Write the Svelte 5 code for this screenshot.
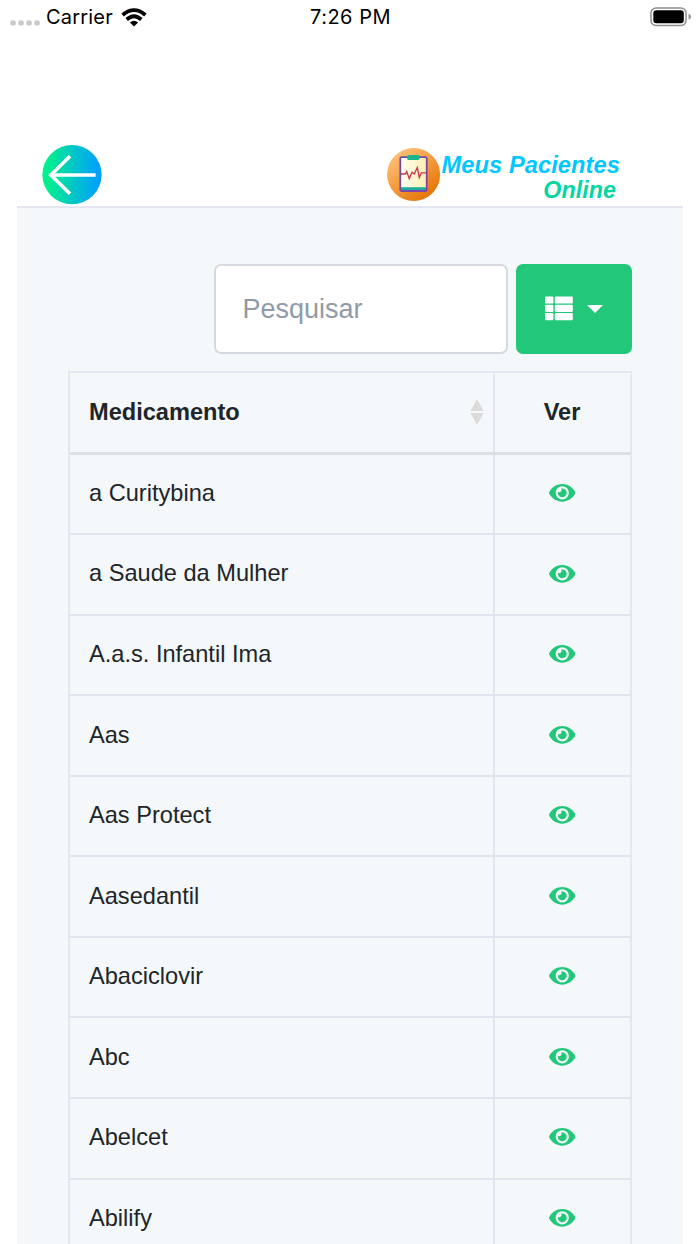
<script>
  let search = "";

  const medicines = [
    "a Curitybina",
    "a Saude da Mulher",
    "A.a.s. Infantil Ima",
    "Aas",
    "Aas Protect",
    "Aasedantil",
    "Abaciclovir",
    "Abc",
    "Abelcet",
    "Abilify",
  ];
</script>

<div class="screen">
  <div class="status">
    <div class="carrier">
      <svg class="dots" width="30" height="6" viewBox="0 0 30 6" fill="#c9c9c9">
        <circle cx="3" cy="3" r="2.8" />
        <circle cx="11" cy="3" r="2.8" />
        <circle cx="19" cy="3" r="2.8" />
        <circle cx="27" cy="3" r="2.8" />
      </svg>
      <span>Carrier</span>
      <svg class="wifi" width="26" height="19" viewBox="0 0 26 19">
        <g fill="none" stroke="#000" stroke-width="3.8">
          <path d="M1.6 7Q13-2.8 24.4 7" />
          <path d="M5.7 11.5Q13 5 20.3 11.5" />
        </g>
        <path d="M13 18.6 8.9 14.6Q13 11 17.1 14.6Z" />
      </svg>
    </div>
    <div class="time">7:26 PM</div>
    <svg class="battery" width="41" height="20" viewBox="0 0 41 20">
      <rect x="1" y="1" width="35" height="17.4" rx="5" fill="none" stroke="#8e8e8e" stroke-width="1.5" />
      <rect x="3.3" y="3.2" width="30.5" height="13" rx="3" />
      <path d="M38.6 6.8Q41 7.4 41 9.7T38.6 12.6Z" fill="#8e8e8e" />
    </svg>
  </div>

  <header>
    <button class="back" type="button" aria-label="Voltar">
      <svg width="60" height="60" viewBox="0 0 60 60">
        <defs>
          <linearGradient id="back-fill">
            <stop offset="0" stop-color="#00f38a" />
            <stop offset=".12" stop-color="#00ed91" />
            <stop offset=".9" stop-color="#00a3f8" />
            <stop offset="1" stop-color="#009cff" />
          </linearGradient>
        </defs>
        <circle cx="30" cy="29.7" r="29.6" fill="url(#back-fill)" />
        <path d="M53.6 30H9.5M28 11.2 8.8 30 28 48.8" fill="none" stroke="#fff" stroke-width="3.6" />
      </svg>
    </button>
    <div class="brand">
      <svg width="54" height="54" viewBox="0 0 54 54">
        <defs>
          <linearGradient id="logo-fill" x1=".15" y1=".1" x2=".8" y2=".95">
            <stop offset="0" stop-color="#ffc078" />
            <stop offset="1" stop-color="#e57300" />
          </linearGradient>
          <linearGradient id="board-fill" x1="0" y1="0" x2="1" y2="1">
            <stop offset="0" stop-color="#6152a5" />
            <stop offset="1" stop-color="#8b3fae" />
          </linearGradient>
          <linearGradient id="sheet-fill">
            <stop offset="0" stop-color="#fffdf0" />
            <stop offset="1" stop-color="#fff0b3" />
          </linearGradient>
        </defs>
        <circle cx="26.6" cy="26.5" r="26.5" fill="url(#logo-fill)" />
        <rect x="12.4" y="8.2" width="28.2" height="35.8" rx="2.5" fill="url(#board-fill)" />
        <rect x="14.2" y="10" width="24.6" height="30" fill="url(#sheet-fill)" />
        <rect x="14.2" y="39.2" width="24.6" height="2.8" fill="#20ad96" />
        <rect x="20.2" y="7" width="12.4" height="5" rx="1.6" fill="#19b58d" />
        <path
          d="M14 26h4.5l1.2-2.5 2.6 7.2 2.7-6.4 2.3 1.7 3-6.5 2 10 2-4.7h4.7"
          fill="none"
          stroke="#c8324b"
          stroke-width="1.3"
        />
      </svg>
      <div class="name">
        <div>Meus Pacientes</div>
        <div class="online">Online</div>
      </div>
    </div>
  </header>

  <main>
    <div class="toolbar">
      <input type="text" placeholder="Pesquisar" bind:value={search} />
      <button class="columns" type="button" aria-label="Colunas">
        <svg width="28" height="25" viewBox="0 0 28 25" fill="#fff">
          <rect y="0.4" width="8.4" height="7.2" rx="1.2" />
          <rect x="9.8" y="0.4" width="18" height="7.2" rx="1.2" />
          <rect y="8.7" width="8.4" height="7.2" rx="1.2" />
          <rect x="9.8" y="8.7" width="18" height="7.2" rx="1.2" />
          <rect y="17" width="8.4" height="7.2" rx="1.2" />
          <rect x="9.8" y="17" width="18" height="7.2" rx="1.2" />
        </svg>
        <svg width="16" height="8" viewBox="0 0 16 8" fill="#fff">
          <path d="M0 0H16L8 8Z" />
        </svg>
      </button>
    </div>

    <div class="table">
      <div class="row head">
        <div class="cell">
          <span>Medicamento</span>
          <svg width="14" height="26" viewBox="0 0 14 26" fill="#dbdbdb">
            <path d="M7 .3 13.7 12H.3ZM.3 14H13.7L7 25.7Z" />
          </svg>
        </div>
        <div class="cell view">Ver</div>
      </div>
      {#each medicines as medicine}
        <div class="row">
          <div class="cell name-cell">{medicine}</div>
          <div class="cell view">
            <svg class="eye" width="26.5" height="23.6" viewBox="0 0 576 512" fill="#23c77a">
              <path
                d="M572.52 241.4C518.29 135.59 410.93 64 288 64S57.68 135.64 3.48 241.41a32.35 32.35 0 0 0 0 29.19C57.71 376.41 165.07 448 288 448s230.32-71.64 284.52-177.41a32.35 32.35 0 0 0 0-29.19zM288 400a144 144 0 1 1 144-144 143.93 143.93 0 0 1-144 144zm0-240a95.31 95.31 0 0 0-25.31 3.79 47.85 47.85 0 0 1-66.9 66.9A95.78 95.78 0 1 0 288 160z"
              />
            </svg>
          </div>
        </div>
      {/each}
    </div>
  </main>
</div>

<style>
  :global(body) {
    background: #fff;
  }

  .screen {
    box-sizing: border-box;
    height: 1244px;
    overflow: hidden;
    display: flex;
    flex-direction: column;
    font-family: "Liberation Sans", Arial, sans-serif;
    font-size: 23.6px;
    color: #212529;
  }

  .screen * {
    box-sizing: border-box;
  }

  svg {
    display: block;
    flex: none;
  }

  .status {
    display: grid;
    grid-template-columns: 1fr auto 1fr;
    align-items: center;
    height: 34px;
    padding: 0 9px 0 10px;
    font-family: Inter, sans-serif;
    font-size: 20px;
    color: #000;
  }

  .carrier {
    display: flex;
    align-items: center;
    letter-spacing: 0.2px;
  }

  .time {
    letter-spacing: 0.5px;
  }

  .dots {
    margin: 12px 6px 0 0;
  }

  .wifi {
    margin-left: 8px;
  }

  .battery {
    justify-self: end;
  }

  header {
    display: flex;
    justify-content: space-between;
    height: 172px;
    padding: 111px 80px 0 42px;
  }

  button {
    border: 0;
    cursor: pointer;
  }

  .back {
    height: 60px;
    padding: 0;
    background: none;
  }

  .brand {
    display: flex;
    padding-top: 3px;
  }

  .name {
    padding: 5px 0 0 1px;
    font-size: 23.6px;
    font-weight: bold;
    font-style: italic;
    letter-spacing: 0.1px;
    line-height: 24.5px;
    color: #00c8ff;
    white-space: nowrap;
  }

  .online {
    padding-right: 4px;
    font-size: 23.2px;
    text-align: right;
    color: #06d6a0;
  }

  main {
    flex: 1;
    min-height: 0;
    margin: 0 17px;
    padding: 56px 51px 0;
    border-top: 2px solid #e4e7f1;
    background: #f4f8fb;
  }

  .toolbar {
    display: flex;
    justify-content: flex-end;
    gap: 8px;
    height: 90px;
  }

  input {
    width: 294px;
    padding: 0 26.5px;
    border: 2px solid #d6d9e0;
    border-radius: 7px;
    font: 27px "Liberation Sans", Arial, sans-serif;
    background: #fff;
  }

  input::placeholder {
    color: #8f9ba8;
    opacity: 1;
  }

  .columns {
    display: flex;
    align-items: center;
    justify-content: center;
    gap: 14px;
    width: 116px;
    padding: 0 0 1px;
    border-radius: 7px;
    background: #23c77a;
  }

  .table {
    margin-top: 17px;
    border: solid #e5e8f3;
    border-width: 2px 2px 0;
  }

  .row {
    display: grid;
    grid-template-columns: 1fr 137px;
    height: 80.55px;
    border-bottom: 2px solid #e1e5f0;
  }

  .head {
    height: 81.6px;
    border-bottom: 3px solid #dce0e5;
    font-weight: bold;
  }

  .cell {
    display: flex;
    align-items: center;
    justify-content: space-between;
    padding: 0 9px 0 19px;
  }

  .name-cell {
    padding-bottom: 1px;
  }

  .view {
    justify-content: center;
    padding: 0 1px 0 0;
    border-left: 2px solid #e1e5f0;
  }

  .eye {
    margin-bottom: 2px;
  }
</style>
